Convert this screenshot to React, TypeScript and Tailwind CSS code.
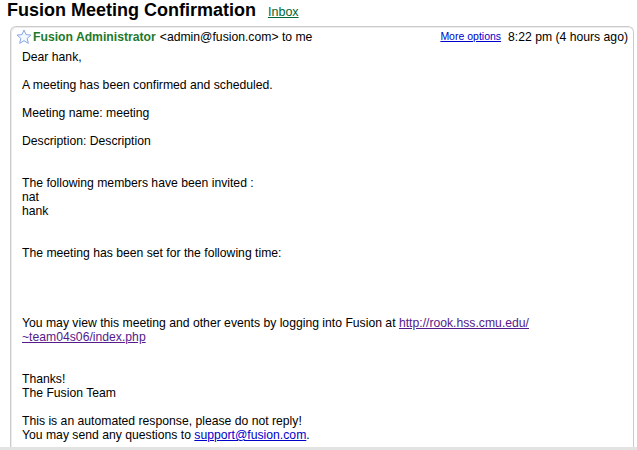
import React from 'react';

function Star() {
  return (
    <svg width="16" height="16" viewBox="0 0 24 24" className="shrink-0 -ml-[1px]">
      <polygon
        points="12,1.5 15,8.4 22.5,9.1 16.8,14 18.5,21.5 12,17.6 5.5,21.5 7.2,14 1.5,9.1 9,8.4"
        fill="#f3f7ff"
        stroke="#86a9e4"
        strokeWidth="1.5"
        strokeLinejoin="round"
      />
    </svg>
  );
}

export default function App() {
  return (
    <div className="w-[637px] h-[450px] overflow-hidden bg-white flex flex-col font-['Liberation_Sans',Arial,sans-serif] text-black">
      {/* Subject line */}
      <div className="flex items-baseline pl-[7px] h-[26px] shrink-0">
        <h1 className="text-[18px] font-bold leading-[20px]">Fusion Meeting Confirmation</h1>
        <a href="#" className="ml-[12px] text-[12.5px] text-[#006633] underline">Inbox</a>
      </div>

      {/* Message card */}
      <div className="flex-1 ml-[10px] mr-[3px] border border-b-0 border-[#cbcbcb] rounded-t-[6px] shadow-[inset_1px_1px_0_#ececec] min-h-0">
        <div className="flex items-center h-[20px] pl-[6px] pr-[5px] text-[12.2px]">
          <Star />
          <span className="ml-[1px] font-bold text-[#1d7a2c]">Fusion Administrator</span>
          <span className="ml-[4px]">&lt;admin@fusion.com&gt; to me</span>
          <a href="#" className="ml-auto text-[10.5px] text-[#0000cc] underline">More options</a>
          <span className="ml-[7px]">8:22 pm (4 hours ago)</span>
        </div>

        <div className="pl-[11px] pt-[3px] text-[12.2px] leading-[14px]">
          Dear hank,<br />
          <br />
          A meeting has been confirmed and scheduled.<br />
          <br />
          Meeting name: meeting<br />
          <br />
          Description: Description<br />
          <br />
          <br />
          The following members have been invited :<br />
          nat<br />
          hank<br />
          <br />
          <br />
          The meeting has been set for the following time:<br />
          <br />
          <br />
          <br />
          <br />
          You may view this meeting and other events by logging into Fusion at{' '}
          <a href="#" className="text-[#551a8b] underline">http://rook.hss.cmu.edu/</a>
          <br />
          <a href="#" className="text-[#551a8b] underline">~team04s06/index.php</a>
          <br />
          <br />
          <br />
          Thanks!<br />
          The Fusion Team<br />
          <br />
          This is an automated response, please do not reply!<br />
          You may send any questions to{' '}
          <a href="#" className="text-[#0000cc] underline">support@fusion.com</a>.
        </div>
      </div>

      <div className="h-[3px] shrink-0 bg-[#e3e3e3]" />
    </div>
  );
}
